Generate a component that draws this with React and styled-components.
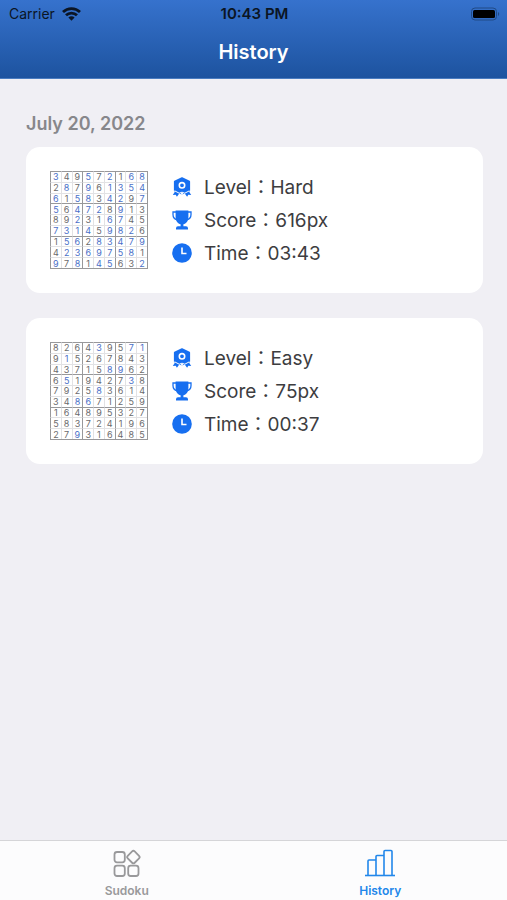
import React from 'react'
import styled, { createGlobalStyle, css } from 'styled-components'

const GlobalStyle = createGlobalStyle`
  * {
    box-sizing: border-box;
  }

  body {
    margin: 0;
    background: #f0eff4;
    font-family: Inter, "Noto Sans CJK JP", sans-serif;
    color: #3d3d3f;
  }
`

const Screen = styled.div`
  display: flex;
  flex-direction: column;
  min-height: 100vh;
`

const Header = styled.header`
  background: linear-gradient(#3672cd, #1d539f);
  border-bottom: 1px solid #4a7cc0;
`

const StatusBar = styled.div`
  display: grid;
  grid-template-columns: 1fr auto 1fr;
  align-items: center;
  height: 27px;
  padding: 0 7px 0 9px;
  font-size: 14px;
  color: #0b1524;
`

const Carrier = styled.span`
  display: flex;
  align-items: center;
  gap: 7px;
`

const Clock = styled.time`
  font-size: 15px;
  font-weight: 600;
`

const BatteryIcon = styled.svg`
  justify-self: end;
`

const Title = styled.h1`
  margin: 0;
  height: 51px;
  line-height: 50px;
  text-align: center;
  font-size: 20px;
  font-weight: 600;
  color: #fff;
`

const Main = styled.main`
  flex: 1;
  padding: 33px 24px 24px 26px;
`

const DateHeading = styled.h2`
  margin: 0 0 11px;
  font-size: 18px;
  font-weight: 600;
  line-height: 24px;
  color: #87878b;
`

const GameList = styled.ul`
  display: flex;
  flex-direction: column;
  gap: 25px;
  margin: 0;
  padding: 0;
  list-style: none;
`

const Card = styled.li`
  display: flex;
  align-items: center;
  gap: 24px;
  padding: 24px;
  border-radius: 14px;
  background: #fff;
`

const Board = styled.table`
  border: solid #98989a;
  border-width: 0 1px 1px 0;
  border-collapse: separate;
  border-spacing: 0;
  table-layout: fixed;
  width: 98px;
  height: 98px;
`

const Cell = styled.td`
  padding: 0;
  border: solid #e2e2e4;
  border-width: 1px 0 0 1px;
  text-align: center;
  font-size: 9px;
  line-height: 9px;
  color: ${props => (props.$filled ? '#4a6fc8' : '#6a6a6c')};

  ${props => props.$col % 3 === 0 && css`
    border-left-color: #98989a;
  `}
  ${props => props.$row % 3 === 0 && css`
    border-top-color: #98989a;
  `}
`

const Stats = styled.div`
  display: flex;
  flex-direction: column;
  margin: -1px 0;
`

const Stat = styled.div`
  display: flex;
  align-items: center;
  gap: 12px;
  height: 33px;
  font-size: 19px;
  line-height: 33px;
  white-space: nowrap;

  svg {
    flex: none;
    width: 20px;
    height: 20px;
    color: #176ff0;
  }
`

const TabBar = styled.nav`
  display: flex;
  height: 60px;
  border-top: 1px solid #d5d5d8;
  background: #fcfcfd;
`

const Tab = styled.button`
  flex: 1;
  display: flex;
  flex-direction: column;
  align-items: center;
  gap: 5px;
  padding: 7px 0 0;
  border: 0;
  background: none;
  font-family: inherit;
  font-size: 12px;
  font-weight: 600;
  line-height: 16px;
  color: ${props => (props.$active ? '#2287ea' : '#99999b')};
`

const games = [
  {
    level: 'Hard',
    score: '616px',
    time: '03:43',
    rows: ['349572168', '287961354', '615834297', '564728913', '892316745', '731459826', '156283479', '423697581', '978145632'],
    filled: ['x..x.x.xx', '.x.x.xxxx', 'x.xx.xx.x', 'x.xxx.x..', '..x..xx..', 'xxxx.xxx.', '.xx.xxxxx', '.xxxxxxx.', 'x.x.xx..x'],
  },
  {
    level: 'Easy',
    score: '75px',
    time: '00:37',
    rows: ['826439571', '915267843', '437158962', '651942738', '792583614', '348671259', '164895327', '583724196', '279316485'],
    filled: ['....x..xx', '.x.......', '.....xx..', '.x.....x.', '....x....', '..xx.....', '.........', '.........', '..x......'],
  },
]

const WifiIcon = () => (
  <svg width="19" height="14" viewBox="0 0 19 14" fill="none" stroke="currentColor" strokeWidth="2.8" aria-hidden="true">
    <path d="M1 5a12.2 12.2 0 0 1 17 0" />
    <path d="M4 8.300a7.800 7.800 0 0 1 11 0" />
    <path d="M9.500 13.700 6.400 10.600a4.400 4.400 0 0 1 6.200 0Z" fill="currentColor" stroke="none" />
  </svg>
)

const Battery = () => (
  <BatteryIcon width="30" height="14" viewBox="0 0 30 14" aria-hidden="true">
    <rect x="1.500" y="1" width="25" height="12" rx="3.500" fill="none" stroke="#204a86" />
    <rect x="3" y="3" width="22" height="8" rx="1.500" fill="#000" />
    <path d="M28 5c1.600.6 1.600 3.400 0 4Z" fill="#204a86" />
  </BatteryIcon>
)

const LevelIcon = () => (
  <svg viewBox="0 0 20 20" aria-hidden="true">
    <path d="M10 1 17.300 4.400V13.400L10 16.800 2.700 13.400V4.400Z" fill="currentColor" stroke="currentColor" strokeWidth="1.600" strokeLinejoin="round" />
    <path d="M3.800 13.200.8 18l2.900-.2 1.200 1.900L8 15.400ZM16.200 13.200l3 4.800-2.900-.2-1.200 1.900L12 15.400Z" fill="currentColor" />
    <path d="m2.600 13.800 4.600 2.400L10 15.200l2.800 1 4.600-2.400" fill="none" stroke="#fff" strokeWidth="1" />
    <path d="M8.800 16.600 10 15.500l1.200 1.100L10 18.500Z" fill="#fff" />
    <circle cx="10" cy="8.300" r="2.700" fill="none" stroke="#fff" strokeWidth="1.600" />
  </svg>
)

const TrophyIcon = () => (
  <svg viewBox="0 0 20 20" aria-hidden="true">
    <path d="M3.600.4h12.800v6.600c0 4-2.300 6.700-5 7.300v2H14a2 2 0 0 1 2 2v1.300H4v-1.300a2 2 0 0 1 2-2h2.600v-2c-2.700-.6-5-3.300-5-7.300Z" fill="currentColor" />
    <path d="M4.500 2H1v2.500c0 3 1.600 4.700 4.200 5.300M15.500 2H19v2.500c0 3-1.600 4.700-4.200 5.300" fill="none" stroke="currentColor" strokeWidth="1.300" />
  </svg>
)

const TimeIcon = () => (
  <svg viewBox="0 0 20 20" aria-hidden="true">
    <circle cx="10" cy="10" r="9.800" fill="currentColor" />
    <path d="M10 4.500V10.500H14.500" fill="none" stroke="#fff" strokeWidth="1.600" />
  </svg>
)

const SudokuIcon = () => (
  <svg width="30" height="30" viewBox="0 0 30 30" fill="none" stroke="currentColor" strokeWidth="1.800" aria-hidden="true">
    <rect x="2.500" y="4" width="10.300" height="10.300" rx="2.500" />
    <rect x="2.500" y="17.700" width="10.300" height="10.300" rx="2.500" />
    <rect x="16.200" y="17.700" width="10.300" height="10.300" rx="2.500" />
    <rect x="16.500" y="4.200" width="9.800" height="9.800" rx="1.800" transform="rotate(45 21.400 9.100)" />
  </svg>
)

const HistoryIcon = () => (
  <svg width="32" height="30" viewBox="0 0 32 30" fill="none" stroke="currentColor" strokeWidth="1.600" aria-hidden="true">
    <path d="M1 27.500H31" />
    <path d="M4 27.500V13a1 1 0 0 1 1-1h7" />
    <path d="M12 27.500V8.500a1 1 0 0 1 1-1h7" />
    <path d="M20 27.500V3.500a1 1 0 0 1 1-1h6a1 1 0 0 1 1 1v24" />
  </svg>
)

const SudokuBoard = ({ rows, filled }) => (
  <Board aria-label="Sudoku board">
    <tbody>
      {rows.map((row, r) => (
        <tr key={r}>
          {row.split('').map((digit, c) => (
            <Cell key={c} $row={r} $col={c} $filled={filled[r][c] === 'x'}>{digit}</Cell>
          ))}
        </tr>
      ))}
    </tbody>
  </Board>
)

const GameCard = ({ game }) => (
  <Card>
    <SudokuBoard rows={game.rows} filled={game.filled} />
    <Stats>
      <Stat><LevelIcon /><span>Level：{game.level}</span></Stat>
      <Stat><TrophyIcon /><span>Score：{game.score}</span></Stat>
      <Stat><TimeIcon /><span>Time：{game.time}</span></Stat>
    </Stats>
  </Card>
)

const App = () => (
  <>
    <GlobalStyle />
    <Screen>
      <Header>
        <StatusBar>
          <Carrier>Carrier <WifiIcon /></Carrier>
          <Clock>10:43 PM</Clock>
          <Battery />
        </StatusBar>
        <Title>History</Title>
      </Header>
      <Main>
        <DateHeading>July 20, 2022</DateHeading>
        <GameList>
          {games.map(game => <GameCard key={game.level} game={game} />)}
        </GameList>
      </Main>
      <TabBar>
        <Tab type="button"><SudokuIcon />Sudoku</Tab>
        <Tab type="button" $active aria-current="page"><HistoryIcon />History</Tab>
      </TabBar>
    </Screen>
  </>
)

export default App
